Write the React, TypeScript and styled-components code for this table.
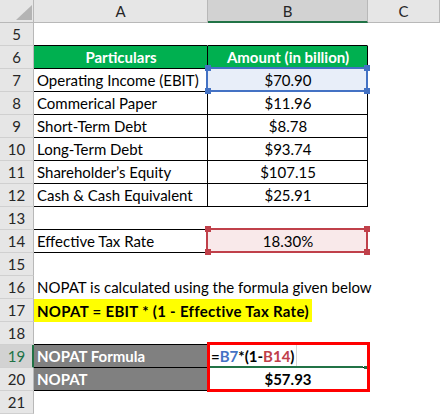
import React from 'react';
import styled, { createGlobalStyle } from 'styled-components';

const GlobalStyle = createGlobalStyle`
  html, body { margin: 0; padding: 0; background: #ffffff; }
  body { font-family: Lato, "Open Sans", sans-serif; }
`;

const HEAD_BG = '#e6e6e6';
const HEAD_SEL = '#d2d2d2';
const HEAD_LINE_V = '#b8b8b8';
const HEAD_LINE_H = '#d0d0d0';
const XL_GREEN = '#217346';
const BLUE = '#4472c4';
const REF_RED = '#c0404a';

const Sheet = styled.div`
  position: relative;
  display: grid;
  grid-template-columns: 34px 174px 160px 72px;
  grid-auto-rows: 23px;
  width: 440px;
  height: 414px;
  overflow: hidden;
  font-family: Lato, "Open Sans", sans-serif;
  font-size: 15px;
  color: #000;
  background: #fff;
`;

const Corner = styled.div`
  box-sizing: border-box;
  background: ${HEAD_BG};
  border-right: 1px solid ${HEAD_LINE_V};
  border-bottom: 1px solid ${HEAD_LINE_V};
  display: flex;
  align-items: flex-start;
  justify-content: flex-end;
  padding: 5px 1px 0 0;
`;

const ColHeader = styled.div<{ $selected?: boolean }>`
  box-sizing: border-box;
  background: ${p => (p.$selected ? HEAD_SEL : HEAD_BG)};
  border-right: 1px solid ${HEAD_LINE_V};
  border-bottom: ${p => (p.$selected ? `2px solid ${XL_GREEN}` : `1px solid ${HEAD_LINE_V}`)};
  display: flex;
  align-items: center;
  justify-content: center;
  color: #262626;
  padding-top: ${p => (p.$selected ? '1px' : '0')};
`;

const RowHeader = styled.div<{ $selected?: boolean }>`
  box-sizing: border-box;
  background: ${p => (p.$selected ? HEAD_SEL : HEAD_BG)};
  border-right: ${p => (p.$selected ? `2px solid ${XL_GREEN}` : `1px solid ${HEAD_LINE_V}`)};
  border-bottom: 1px solid ${HEAD_LINE_H};
  display: flex;
  align-items: center;
  justify-content: center;
  color: ${p => (p.$selected ? XL_GREEN : '#262626')};
  padding-left: ${p => (p.$selected ? '1px' : '0')};
`;

type CellProps = {
  $fill?: string;
  $r?: string;
  $b?: string;
  $center?: boolean;
  $bold?: boolean;
  $ink?: string;
  $span?: number;
};

const Cell = styled.div<CellProps>`
  box-sizing: border-box;
  position: relative;
  display: flex;
  align-items: center;
  justify-content: ${p => (p.$center ? 'center' : 'flex-start')};
  padding: 0 2px 0 3px;
  background: ${p => p.$fill ?? 'transparent'};
  border-right: 1px solid ${p => p.$r ?? 'transparent'};
  border-bottom: 1px solid ${p => p.$b ?? 'transparent'};
  font-weight: ${p => (p.$bold ? 700 : 400)};
  color: ${p => p.$ink ?? '#000'};
  white-space: nowrap;
  grid-column: span ${p => p.$span ?? 1};
`;

const NoteCell = styled.div`
  grid-column: span 3;
  display: flex;
  align-items: stretch;
  white-space: nowrap;
`;

const Highlight = styled.span`
  display: flex;
  align-items: center;
  background: #ffff00;
  font-weight: 700;
  letter-spacing: 0.3px;
  padding: 0 3px 0 3px;
`;

const RefFrame = styled.span<{ $c: string }>`
  position: absolute;
  left: -2px;
  top: -2px;
  right: -1px;
  bottom: -1px;
  border: 2px solid ${p => p.$c};
  pointer-events: none;
  z-index: 2;
`;

const Handle = styled.span<{ $c: string; $v: 'top' | 'bottom'; $h: 'left' | 'right' }>`
  position: absolute;
  width: 6px;
  height: 6px;
  background: ${p => p.$c};
  ${p => p.$v}: -4px;
  ${p => p.$h}: ${p => (p.$h === 'left' ? '-3px' : '-4px')};
`;

const FormulaBox = styled.span`
  display: flex;
  align-items: center;
  align-self: stretch;
  padding-right: 2px;
  border-right: 1px solid #d6d6d6;
  font-weight: 700;
`;

const RefText = styled.span<{ $c: string }>`
  color: ${p => p.$c};
`;

const EditLine = styled.span`
  position: absolute;
  left: 2px;
  right: 4px;
  bottom: -1px;
  height: 2px;
  background: ${XL_GREEN};
  z-index: 3;
`;

const FillHandle = styled.span`
  position: absolute;
  right: 0;
  bottom: -2px;
  width: 3px;
  height: 3px;
  background: ${XL_GREEN};
  z-index: 3;
`;

const Callout = styled.div`
  position: absolute;
  grid-column: 3 / 4;
  grid-row: 16 / 18;
  top: -3px;
  left: -1px;
  right: -2px;
  bottom: -1px;
  border: 3px solid #ff0000;
  pointer-events: none;
  z-index: 4;
`;

const RefCell: React.FC<{ c: string; fill: string; children: React.ReactNode }> = ({ c, fill, children }) => (
  <Cell $center $fill={fill}>
    {children}
    <RefFrame $c={c}>
      <Handle $c={c} $v="top" $h="left" />
      <Handle $c={c} $v="top" $h="right" />
      <Handle $c={c} $v="bottom" $h="left" />
      <Handle $c={c} $v="bottom" $h="right" />
    </RefFrame>
  </Cell>
);

const CornerTriangle = () => (
  <svg width="16" height="15" viewBox="0 0 16 15">
    <polygon points="16,0 16,15 0,15" fill="#b4b4b4" />
  </svg>
);

const rows: [string, string][] = [
  ['Operating Income (EBIT)', '$70.90'],
  ['Commerical Paper', '$11.96'],
  ['Short-Term Debt', '$8.78'],
  ['Long-Term Debt', '$93.74'],
  ['Shareholder\u2019s Equity', '$107.15'],
  ['Cash & Cash Equivalent', '$25.91'],
];

const B = '#000';

export default function App() {
  return (
    <>
      <GlobalStyle />
      <Sheet>
        <Corner>
          <CornerTriangle />
        </Corner>
        <ColHeader>A</ColHeader>
        <ColHeader $selected>B</ColHeader>
        <ColHeader>C</ColHeader>

        <RowHeader>5</RowHeader>
        <Cell $b={B} />
        <Cell $b={B} />
        <Cell />

        <RowHeader>6</RowHeader>
        <Cell $center $bold $ink="#fff" $fill="#00b050" $r={B} $b={B}>Particulars</Cell>
        <Cell $center $bold $ink="#fff" $fill="#00b050" $r={B} $b={B}>Amount (in billion)</Cell>
        <Cell />

        {rows.map(([label, value], i) => (
          <React.Fragment key={label}>
            <RowHeader>{7 + i}</RowHeader>
            <Cell $r={B} $b={B}>{label}</Cell>
            {i === 0 ? (
              <RefCell c={BLUE} fill="#e8eef9">{value}</RefCell>
            ) : (
              <Cell $center $r={B} $b={B}>{value}</Cell>
            )}
            <Cell />
          </React.Fragment>
        ))}

        <RowHeader>13</RowHeader>
        <Cell $b={B} />
        <Cell />
        <Cell />

        <RowHeader>14</RowHeader>
        <Cell $b={B}>Effective Tax Rate</Cell>
        <RefCell c={REF_RED} fill="#f9e9ea">18.30%</RefCell>
        <Cell />

        <RowHeader>15</RowHeader>
        <Cell />
        <Cell />
        <Cell />

        <RowHeader>16</RowHeader>
        <Cell $span={3}>NOPAT is calculated using the formula given below</Cell>

        <RowHeader>17</RowHeader>
        <NoteCell>
          <Highlight>NOPAT = EBIT * (1 - Effective Tax Rate)</Highlight>
        </NoteCell>

        <RowHeader>18</RowHeader>
        <Cell $b={B} />
        <Cell $b={B} />
        <Cell />

        <RowHeader $selected>19</RowHeader>
        <Cell $bold $ink="#fff" $fill="#808080" $r={B} $b={B}>NOPAT Formula</Cell>
        <Cell $b={B} $r={B}>
          <FormulaBox>
            =<RefText $c={BLUE}>B7</RefText>*(1-<RefText $c={REF_RED}>B14</RefText>)
          </FormulaBox>
          <EditLine />
          <FillHandle />
        </Cell>
        <Cell />

        <RowHeader>20</RowHeader>
        <Cell $bold $ink="#fff" $fill="#808080" $r={B} $b={B}>NOPAT</Cell>
        <Cell $center $bold $r={B} $b={B}>$57.93</Cell>
        <Cell />

        <RowHeader>21</RowHeader>
        <Cell />
        <Cell />
        <Cell />

        <Callout />
      </Sheet>
    </>
  );
}
